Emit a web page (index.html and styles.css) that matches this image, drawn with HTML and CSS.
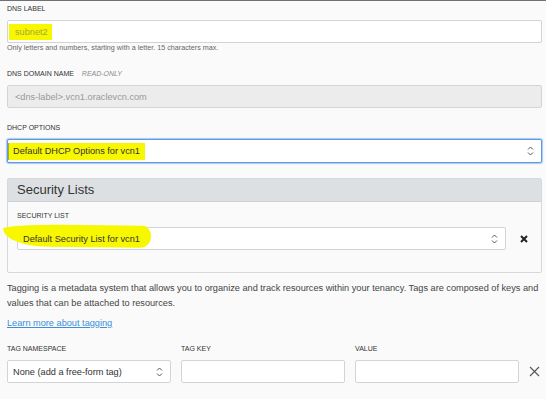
FILE: index.html
```html
<!DOCTYPE html>
<html lang="en">
<head>
  <meta charset="UTF-8">
  <title>Create Subnet</title>
  <link rel="stylesheet" href="styles.css">
</head>
<body>
  <div class="form">
    <div class="field first">
      <div class="label">DNS Label</div>
      <div class="input"><span class="mark mark-small">subnet2</span></div>
      <div class="help">Only letters and numbers, starting with a letter. 15 characters max.</div>
    </div>

    <div class="field">
      <div class="label">DNS Domain Name <span class="note">READ-ONLY</span></div>
      <div class="input readonly">&lt;dns-label&gt;.vcn1.oraclevcn.com</div>
    </div>

    <div class="field dhcp">
      <div class="label">DHCP Options</div>
      <div class="select focused">
        <span class="mark mark-bar">Default DHCP Options for vcn1</span>
        <svg class="chev" width="7" height="10" viewBox="0 0 7 10"><path d="M1 3.5 L3.5 1 L6 3.5 M1 6.5 L3.5 9 L6 6.5" fill="none" stroke="#555" stroke-width="1"/></svg>
      </div>
    </div>

    <div class="panel">
      <div class="panel-head">Security Lists</div>
      <div class="panel-body">
        <div class="label">Security List</div>
        <div class="row">
          <div class="select grow">
            <span class="brush"></span>
            <span class="select-text">Default Security List for vcn1</span>
            <svg class="chev" width="7" height="10" viewBox="0 0 7 10"><path d="M1 3.5 L3.5 1 L6 3.5 M1 6.5 L3.5 9 L6 6.5" fill="none" stroke="#555" stroke-width="1"/></svg>
          </div>
          <svg class="remove-bold" width="8" height="8" viewBox="0 0 8 8"><path d="M1 1 L7 7 M7 1 L1 7" stroke="#222" stroke-width="2"/></svg>
        </div>
      </div>
    </div>

    <p class="about">Tagging is a metadata system that allows you to organize and track resources within your tenancy. Tags are composed of keys and values that can be attached to resources.</p>
    <a class="learn" href="#">Learn more about tagging</a>

    <div class="tags">
      <div class="tag-col">
        <div class="label">Tag Namespace</div>
        <div class="select">
          <span>None (add a free-form tag)</span>
          <svg class="chev" width="7" height="10" viewBox="0 0 7 10"><path d="M1 3.5 L3.5 1 L6 3.5 M1 6.5 L3.5 9 L6 6.5" fill="none" stroke="#555" stroke-width="1"/></svg>
        </div>
      </div>
      <div class="tag-col">
        <div class="label">Tag Key</div>
        <div class="input"></div>
      </div>
      <div class="tag-col">
        <div class="label">Value</div>
        <div class="input"></div>
      </div>
      <svg class="remove" width="11" height="11" viewBox="0 0 11 11"><path d="M1 1 L10 10 M10 1 L1 10" stroke="#555" stroke-width="1.1"/></svg>
    </div>
  </div>
</body>
</html>
```

FILE: styles.css
```css
body {
  margin: 0;
  background-color: #fafafa;
  font-family: "Liberation Sans", Arial, sans-serif;
  color: #333;
  border-top: 1px solid #6e7276;
}
.form {
  padding: 3px 4px 0 7px;
}
.field {
  margin-top: 16px;
}
.field.first {
  margin-top: 0;
}
.field.dhcp {
  margin-top: 15px;
}
.label {
  font-size: 7px;
  line-height: 10px;
  text-transform: uppercase;
  color: #333;
  margin-bottom: 6px;
}
.note {
  font-style: italic;
  color: #8a8a8a;
  margin-left: 6px;
}
.input, .select {
  box-sizing: border-box;
  height: 23px;
  background: #fff;
  border: 1px solid #d3d4d6;
  border-radius: 2px;
  font-size: 9.2px;
  display: flex;
  align-items: center;
  padding: 0 7px;
}
.readonly {
  background: #ececec;
  color: #999;
  padding-left: 7px;
}
.help {
  font-size: 7.2px;
  line-height: 10px;
  color: #666;
}
.select {
  justify-content: space-between;
  position: relative;
  padding-left: 5px;
}
.select.focused {
  height: 24px;
  border: 1px solid #5f9ae0;
  box-shadow: 0 0 1px 1px #a9c9ef;
  padding-left: 0;
}
.mark {
  background: #f7f700;
}
.mark-small {
  color: #a9a53c;
  margin-left: -6px;
  padding: 3px 4px 3px 6px;
  line-height: 10px;
}
.mark-bar {
  color: #333;
  padding: 3px 5px 3px 4px;
  line-height: 11px;
  border-left: 1px solid #9cb330;
}
.chev {
  flex: none;
}
.panel {
  margin-top: 15px;
  border: 1px solid #d6d8da;
  border-radius: 2px;
}
.panel-head {
  background: #dde0e3;
  border-bottom: 1px solid #cfd2d5;
  height: 22px;
  line-height: 22px;
  font-size: 13px;
  padding-left: 9px;
  color: #333;
}
.panel-body {
  padding: 9px 9px 22px 9px;
}
.row {
  display: flex;
  align-items: center;
}
.grow {
  flex: 1;
  margin-right: 14px;
}
.brush {
  position: absolute;
  left: -15px;
  top: -3px;
  width: 148px;
  height: 22px;
  background: #f7f700;
  border-radius: 40% 8px 10px 30% / 20% 50% 50% 80%;
  transform: rotate(0.6deg);
}
.select-text {
  position: relative;
}
.remove-bold {
  flex: none;
  margin-right: 4px;
}
.about {
  font-size: 9.2px;
  line-height: 15px;
  color: #444;
  margin: 8px 0 0 0;
}
.learn {
  display: inline-block;
  margin-top: 7px;
  font-size: 9.2px;
  line-height: 10px;
  color: #3b8ed8;
}
.tags {
  display: flex;
  align-items: flex-end;
  gap: 10px;
  margin-top: 14px;
}
.tag-col {
  flex: none;
  width: 164px;
}
.remove {
  flex: none;
  margin-bottom: 6px;
}
```
